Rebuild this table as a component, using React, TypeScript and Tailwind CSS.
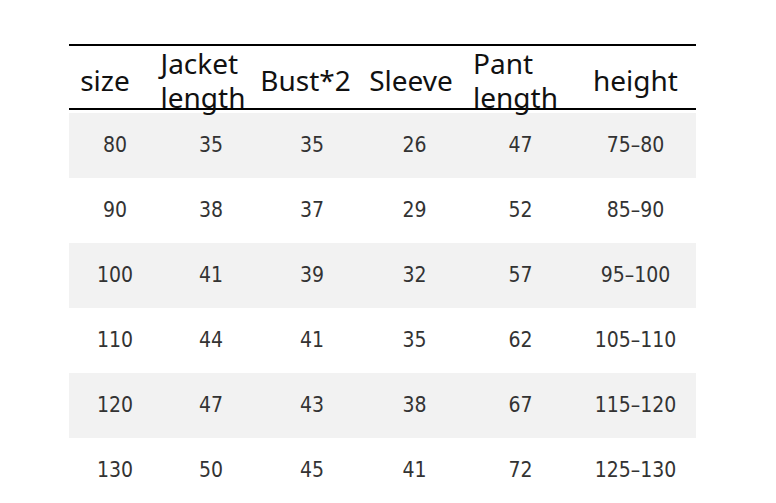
const header = [
  { label: ["size"], cls: "pr-3" },
  { label: ["Jacket", "length"], cls: "" },
  { label: ["Bust*2"], cls: "" },
  { label: ["Sleeve"], cls: "" },
  { label: ["Pant", "length"], cls: "pr-2" },
  { label: ["height"], cls: "" },
];

const rows = [
  ["80", "35", "35", "26", "47", "75–80"],
  ["90", "38", "37", "29", "52", "85–90"],
  ["100", "41", "39", "32", "57", "95–100"],
  ["110", "44", "41", "35", "62", "105–110"],
  ["120", "47", "43", "38", "67", "115–120"],
  ["130", "50", "45", "41", "72", "125–130"],
];

export default function App() {
  return (
    <div className="h-[503px] w-[776px] overflow-hidden bg-white">
      <div className="ml-[69px] w-[627px] pt-[44px]">
        <div
          className="grid h-[66px] grid-cols-[84px_100px_105px_106px_111px_121px] items-center border-y-2 border-black text-[28px] text-[#111]"
          style={{ fontFamily: '"Noto Sans", sans-serif' }}
        >
          {header.map((h, i) => (
            <div key={i} className={`flex h-full items-center justify-center ${h.cls}`}>
              <div className="text-left leading-[34px]">
                {h.label.map((l) => (
                  <div key={l}>{l}</div>
                ))}
              </div>
            </div>
          ))}
        </div>
        <div className="pt-[3px]" style={{ fontFamily: '"Liberation Sans Narrow", "DejaVu Sans Condensed", sans-serif' }}>
          {rows.map((r, i) => (
            <div
              key={i}
              className={`grid h-[65px] grid-cols-[92px_100px_102px_103px_109px_121px] items-center text-[21px] text-[#333] ${
                i % 2 === 0 ? "bg-[#f2f2f2]" : "bg-white"
              }`}
            >
              {r.map((c, j) => (
                <div key={j} className="text-center">
                  {c}
                </div>
              ))}
            </div>
          ))}
        </div>
      </div>
    </div>
  );
}
